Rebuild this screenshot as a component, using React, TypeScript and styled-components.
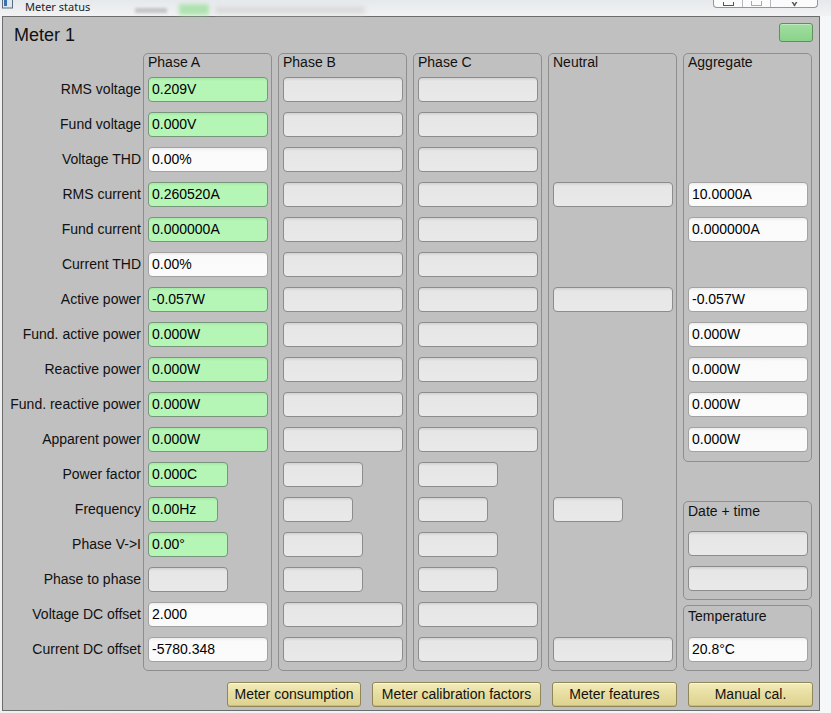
import React from "react";
import styled, { createGlobalStyle } from "styled-components";

type Kind = "green" | "white" | "empty";
type Cell = { kind: Kind; value?: string; width?: number } | null;

const GlobalStyle = createGlobalStyle`
  html, body {
    margin: 0;
    padding: 0;
  }
  body {
    background: #eef0f2;
    font-family: "Liberation Sans", Arial, sans-serif;
    overflow: hidden;
  }
`;

const labels = [
  "RMS voltage",
  "Fund voltage",
  "Voltage THD",
  "RMS current",
  "Fund current",
  "Current THD",
  "Active power",
  "Fund. active power",
  "Reactive power",
  "Fund. reactive power",
  "Apparent power",
  "Power factor",
  "Frequency",
  "Phase V->I",
  "Phase to phase",
  "Voltage DC offset",
  "Current DC offset",
];

// field widths per row, shared by the phase columns
const widths = [120, 120, 120, 120, 120, 120, 120, 120, 120, 120, 120, 80, 70, 80, 80, 120, 120];

const g = (value: string): Cell => ({ kind: "green", value });
const w = (value: string): Cell => ({ kind: "white", value });
const e = (width = 120): Cell => ({ kind: "empty", width });

const phaseA: Cell[] = [
  g("0.209V"),
  g("0.000V"),
  w("0.00%"),
  g("0.260520A"),
  g("0.000000A"),
  w("0.00%"),
  g("-0.057W"),
  g("0.000W"),
  g("0.000W"),
  g("0.000W"),
  g("0.000W"),
  g("0.000C"),
  g("0.00Hz"),
  g("0.00°"),
  e(),
  w("2.000"),
  w("-5780.348"),
].map((c, i) => (c ? { ...c, width: widths[i] } : c));

const emptyPhase: Cell[] = widths.map((wd) => e(wd));

const neutral: Cell[] = widths.map((_, i) => {
  if (i === 3 || i === 6 || i === 16) return e(120);
  if (i === 12) return e(70);
  return null;
});

const aggregate: Cell[] = [
  null,
  null,
  null,
  w("10.0000A"),
  w("0.000000A"),
  null,
  w("-0.057W"),
  w("0.000W"),
  w("0.000W"),
  w("0.000W"),
  w("0.000W"),
];

const columns = [
  { title: "Phase A", cells: phaseA },
  { title: "Phase B", cells: emptyPhase },
  { title: "Phase C", cells: emptyPhase },
  { title: "Neutral", cells: neutral },
];

const buttons = [
  { text: "Meter consumption", width: 134 },
  { text: "Meter calibration factors", width: 169 },
  { text: "Meter features", width: 125 },
  { text: "Manual cal.", width: 125 },
];

const FieldCells = ({ cells }: { cells: Cell[] }) => (
  <>
    {cells.map((c, i) =>
      c ? (
        <Field key={i} $kind={c.kind} $width={c.width ?? 120}>
          {c.value}
        </Field>
      ) : (
        <Slot key={i} />
      )
    )}
  </>
);

const App = () => {
  return (
    <>
      <GlobalStyle />
      <Window>
        <TitleBar>
          <AppIcon width="11" height="9" viewBox="0 0 11 9">
            <rect x="0.5" y="-3" width="10" height="11" fill="#dfe8f0" stroke="#5a6c80" />
            <rect x="2" y="0" width="3" height="6" fill="#3b6fb0" />
          </AppIcon>
          <WindowTitle>Meter status</WindowTitle>
          <BlurGray />
          <BlurGreen />
          <BlurBar />
          <Spacer />
          <Controls>
            <ControlBtn $w={28}>
              <MinGlyph />
            </ControlBtn>
            <ControlBtn $w={27}>
              <MaxGlyph />
            </ControlBtn>
            <ControlBtn $w={46}>
              <svg width="9" height="5" viewBox="0 0 9 5">
                <path d="M1 -2 L5 4 M8 -2 L4 4" stroke="#555" strokeWidth="1.4" fill="none" />
              </svg>
            </ControlBtn>
          </Controls>
        </TitleBar>

        <Panel>
          <Header>
            <MeterTitle>Meter 1</MeterTitle>
            <Indicator />
          </Header>

          <Body>
            <LabelColumn>
              {labels.map((l) => (
                <RowLabel key={l}>{l}</RowLabel>
              ))}
            </LabelColumn>

            <Columns>
              {columns.map((col) => (
                <GroupBox key={col.title}>
                  <Legend>{col.title}</Legend>
                  <FieldCells cells={col.cells} />
                </GroupBox>
              ))}

              <Stack>
                <GroupBox $pad={9}>
                  <Legend>Aggregate</Legend>
                  <FieldCells cells={aggregate} />
                </GroupBox>
                <GroupBox $legend={29} $lift={1} $push>
                  <Legend>Date + time</Legend>
                  <FieldCells cells={[e(), e()]} />
                </GroupBox>
                <GroupBox $legend={31} $lift={2} $top={5}>
                  <Legend>Temperature</Legend>
                  <FieldCells cells={[w("20.8°C")]} />
                </GroupBox>
              </Stack>
            </Columns>
          </Body>

          <ButtonBar>
            {buttons.map((b) => (
              <ActionButton key={b.text} $width={b.width}>
                {b.text}
              </ActionButton>
            ))}
          </ButtonBar>
        </Panel>
      </Window>
    </>
  );
};

export default App;

const Window = styled.div`
  width: 831px;
  height: 713px;
  overflow: hidden;
  background: linear-gradient(90deg, #eef0f2 0, #f6f7f8 100%);
`;

const TitleBar = styled.div`
  height: 16px;
  display: flex;
  align-items: flex-start;
  background: linear-gradient(180deg, #e6e9ec 0, #f1f2f3 100%);
`;

const AppIcon = styled.svg`
  margin: 0 0 0 2px;
  flex: none;
`;

const WindowTitle = styled.div`
  margin: 0 0 0 12px;
  font-family: "Segoe UI", "Noto Sans", "Liberation Sans", sans-serif;
  font-size: 11px;
  line-height: 14px;
  color: #222;
`;

const BlurGray = styled.div`
  margin: 8px 0 0 45px;
  width: 32px;
  height: 5px;
  background: #a8a8a8;
  filter: blur(1.5px);
  opacity: 0.6;
`;

const BlurGreen = styled.div`
  margin: 4px 0 0 12px;
  width: 30px;
  height: 11px;
  background: #9fe09f;
  filter: blur(2px);
  opacity: 0.8;
`;

const BlurBar = styled.div`
  margin: 6px 0 0 6px;
  width: 150px;
  height: 8px;
  background: #dcdcdc;
  filter: blur(2px);
`;

const Spacer = styled.div`
  flex: 1;
`;

const Controls = styled.div`
  display: flex;
  margin-right: 13px;
  height: 7px;
  border: 1px solid #8f969e;
  border-top: none;
  border-radius: 0 0 4px 4px;
  background: #fbfbfb;
  overflow: hidden;
`;

const ControlBtn = styled.div<{ $w: number }>`
  width: ${(p) => p.$w}px;
  display: flex;
  justify-content: center;
  align-items: flex-end;
  border-left: 1px solid #b5bac0;

  &:first-child {
    border-left: none;
  }
`;

const MinGlyph = styled.div`
  width: 9px;
  height: 3px;
  border: 1px solid #555;
  border-top: none;
  margin-bottom: 1px;
`;

const MaxGlyph = styled.div`
  width: 9px;
  height: 4px;
  border: 1px solid #aaa;
  border-top: none;
  margin-bottom: 1px;
`;

const Panel = styled.div`
  margin-left: 2px;
  width: 818px;
  height: 695px;
  box-sizing: border-box;
  border: 1px solid #6c6c6c;
  background: #c0c0c0;
  color: #111;
`;

const Header = styled.div`
  height: 36px;
  box-sizing: border-box;
  display: flex;
  justify-content: space-between;
  align-items: flex-start;
  padding: 6px 6px 0 11px;
`;

const MeterTitle = styled.div`
  margin-top: 2px;
  font-size: 18px;
  line-height: 20px;
  color: #111;
`;

const Indicator = styled.div`
  width: 34px;
  height: 19px;
  box-sizing: border-box;
  border: 1px solid #5f8f5f;
  border-radius: 3px;
  background: linear-gradient(180deg, #a0dea0 0, #8bd28b 100%);
  box-shadow: inset 0 1px 0 #bdebbd;
`;

const Body = styled.div`
  display: flex;
`;

const LabelColumn = styled.div`
  width: 140px;
  box-sizing: border-box;
  padding: 24px 2px 0 0;
  display: flex;
  flex-direction: column;
  gap: 10px;
`;

const RowLabel = styled.div`
  height: 25px;
  line-height: 25px;
  font-size: 14px;
  text-align: right;
  white-space: nowrap;
`;

const Columns = styled.div`
  display: flex;
  gap: 6px;
`;

const Stack = styled.div`
  width: 129px;
  display: flex;
  flex-direction: column;
`;

const GroupBox = styled.div<{
  $legend?: number;
  $lift?: number;
  $pad?: number;
  $push?: boolean;
  $top?: number;
}>`
  width: 129px;
  box-sizing: border-box;
  border: 1px solid #8e8e8e;
  border-radius: 5px;
  padding: 0 3px ${(p) => p.$pad ?? 8}px 4px;
  margin-top: ${(p) => (p.$push ? "auto" : `${p.$top ?? 0}px`)};
  display: flex;
  flex-direction: column;
  gap: 10px;

  & > :first-child {
    height: ${(p) => (p.$legend ?? 23) - (p.$lift ?? 0)}px;
    padding-top: ${(p) => p.$lift ?? 0}px;
    margin-bottom: -10px;
  }
`;

const Legend = styled.div`
  font-size: 14px;
  line-height: 16px;
  color: #111;
  white-space: nowrap;
`;

const Slot = styled.div`
  height: 25px;
`;

const Field = styled.div<{ $kind: Kind; $width: number }>`
  width: ${(p) => p.$width}px;
  height: 25px;
  box-sizing: border-box;
  padding: 0 3px;
  border-radius: 4px;
  font-size: 14px;
  line-height: 23px;
  color: #000;
  white-space: nowrap;
  overflow: hidden;
  border: 1px solid
    ${(p) => (p.$kind === "green" ? "#76977a" : p.$kind === "white" ? "#a2a2a2" : "#8c8c8c")};
  background: ${(p) =>
    p.$kind === "green"
      ? "linear-gradient(180deg, #a6e8a6 0, #b5f5b5 3px, #b5f5b5 100%)"
      : p.$kind === "white"
      ? "linear-gradient(180deg, #ececec 0, #fafafa 3px, #fbfbfb 100%)"
      : "linear-gradient(180deg, #d2d2d2 0, #e6e6e6 3px, #e9e9e9 100%)"};
`;

const ButtonBar = styled.div`
  display: flex;
  justify-content: flex-end;
  gap: 11px;
  padding: 0 6px;
  margin-top: 11px;
`;

const ActionButton = styled.button<{ $width: number }>`
  width: ${(p) => p.$width}px;
  height: 25px;
  box-sizing: border-box;
  padding: 0;
  border: 1px solid #8f865a;
  border-radius: 3px;
  background: linear-gradient(180deg, #f3ecbb 0, #e8dea2 45%, #ddd28f 100%);
  box-shadow: inset 0 1px 0 #fbf7d8, inset 0 -1px 0 #c7bb7f;
  font-family: "Liberation Sans", Arial, sans-serif;
  font-size: 14px;
  line-height: 23px;
  color: #111;
  white-space: nowrap;
  cursor: pointer;
`;
